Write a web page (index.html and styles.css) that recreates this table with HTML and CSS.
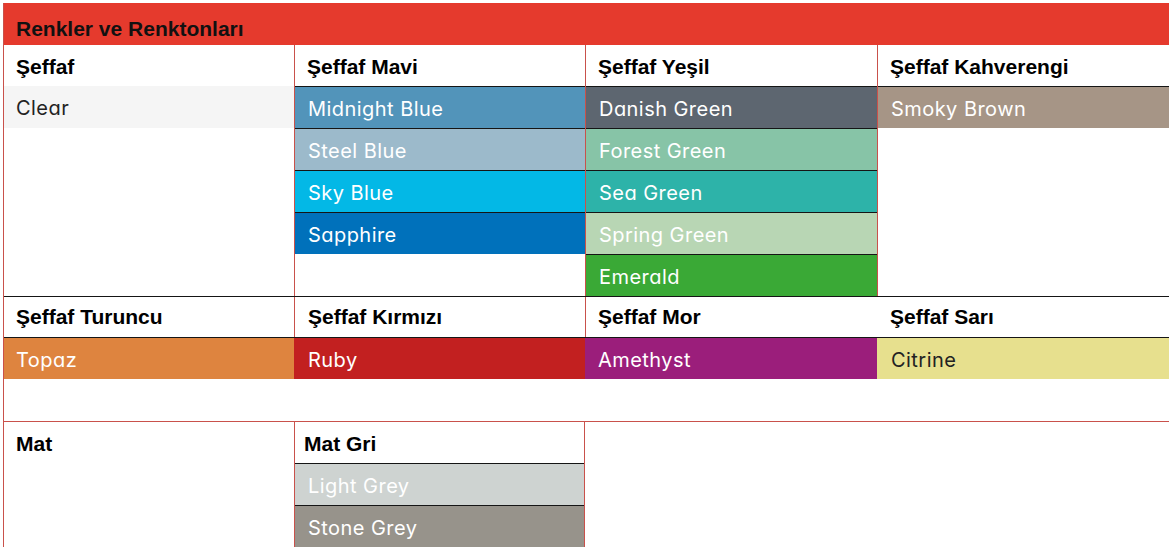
FILE: index.html
```html
<!DOCTYPE html>
<html lang="tr">
<head>
    <meta charset="UTF-8">
    <meta name="viewport" content="width=device-width, initial-scale=1.0">
    <title>Renkler ve Renktonları</title>
    <link rel="stylesheet" href="styles.css">
</head>
<body>
    <div class="chart">
        <div class="chart-title">Renkler ve Renktonları</div>

        <div class="group group-top">
            <div class="family">
                <div class="family-name">Şeffaf</div>
                <div class="swatch dark clear">Clear</div>
            </div>
            <div class="family">
                <div class="family-name">Şeffaf Mavi</div>
                <div class="swatch midnight-blue">Midnight Blue</div>
                <div class="swatch steel-blue">Steel Blue</div>
                <div class="swatch sky-blue">Sky Blue</div>
                <div class="swatch sapphire">Sapphire</div>
            </div>
            <div class="family">
                <div class="family-name">Şeffaf Yeşil</div>
                <div class="swatch danish-green">Danish Green</div>
                <div class="swatch forest-green">Forest Green</div>
                <div class="swatch sea-green">Sea Green</div>
                <div class="swatch spring-green">Spring Green</div>
                <div class="swatch emerald">Emerald</div>
            </div>
            <div class="family">
                <div class="family-name">Şeffaf Kahverengi</div>
                <div class="swatch smoky-brown">Smoky Brown</div>
            </div>
        </div>

        <div class="group group-mid">
            <div class="family">
                <div class="family-name">Şeffaf Turuncu</div>
                <div class="swatch topaz">Topaz</div>
            </div>
            <div class="family">
                <div class="family-name">Şeffaf Kırmızı</div>
                <div class="swatch ruby">Ruby</div>
            </div>
            <div class="family">
                <div class="family-name">Şeffaf Mor</div>
                <div class="swatch amethyst">Amethyst</div>
            </div>
            <div class="family">
                <div class="family-name">Şeffaf Sarı</div>
                <div class="swatch dark citrine">Citrine</div>
            </div>
        </div>

        <div class="group group-mat">
            <div class="family">
                <div class="family-name">Mat</div>
            </div>
            <div class="family">
                <div class="family-name">Mat Gri</div>
                <div class="swatch light-grey">Light Grey</div>
                <div class="swatch stone-grey">Stone Grey</div>
            </div>
            <div class="family"></div>
            <div class="family"></div>
        </div>
    </div>
</body>
</html>
```

FILE: styles.css
```css
body {
    margin: 0;
    padding: 0;
    background-color: #fff;
    font-family: "Liberation Sans", Arial, sans-serif;
}
.chart {
    width: 1166px;
    margin: 3px 0 0 3px;
    border-left: 1px solid #c9514b;
    box-sizing: border-box;
}
.chart-title {
    height: 42px;
    box-sizing: border-box;
    padding: 9px 0 0 12px;
    display: flex;
    align-items: center;
    background-color: #e53a2d;
    color: #111;
    font-size: 21px;
    font-weight: bold;
}
.group {
    display: grid;
    grid-template-columns: 290px 291px 292px 292px;
}
.family-name {
    height: 41px;
    box-sizing: border-box;
    padding: 2px 0 0 12px;
    display: flex;
    align-items: center;
    color: #000;
    font-size: 21px;
    font-weight: bold;
}
.swatch {
    height: 42px;
    box-sizing: border-box;
    padding: 2px 0 0 12px;
    display: flex;
    align-items: center;
    border-top: 1px solid #151515;
    color: #fff;
    font-family: Inter, "Noto Sans", sans-serif;
    font-size: 20px;
    letter-spacing: 0.45px;
    font-feature-settings: "cv11";
}
.family + .family .swatch {
    padding-left: 13px;
}
.swatch.dark {
    color: #222;
}

/* top block: four transparent families */
.group-top .family + .family {
    border-left: 1px solid #c9514b;
}

/* middle block */
.group-mid {
    border-top: 1px solid #151515;
    padding-bottom: 42px;
}
.group-mid .family-name {
    height: 40px;
    padding-top: 0;
}
.group-mid .family:nth-child(2) .family-name,
.group-mid .family:nth-child(3) .family-name {
    border-left: 1px solid #c9514b;
}
.group-mid .family:nth-child(2) .family-name,
.group-mid .family:nth-child(4) .family-name {
    padding-left: 13px;
}
.group-mid .family:nth-child(2) .swatch,
.group-mid .family:nth-child(4) .swatch {
    padding-left: 14px;
}

/* mat block */
.group-mat {
    border-top: 1px solid #c9514b;
}
.group-mat .family:nth-child(2) {
    border-left: 1px solid #c9514b;
    border-right: 1px solid #c9514b;
}
.group-mat .family:nth-child(2) .family-name {
    padding-left: 9px;
}

/* colours */
.clear { background-color: #f5f5f5; border-top: none; }
.midnight-blue { background-color: #5294ba; }
.steel-blue { background-color: #9cbacb; }
.sky-blue { background-color: #03b8e6; }
.sapphire { background-color: #0071bb; }
.danish-green { background-color: #5d6670; }
.forest-green { background-color: #87c4a7; }
.sea-green { background-color: #2db3a9; }
.spring-green { background-color: #b8d6b4; }
.emerald { background-color: #3aa936; }
.smoky-brown { background-color: #a69586; }
.topaz { background-color: #de843f; }
.ruby { background-color: #c22020; }
.amethyst { background-color: #9b1e7b; }
.citrine { background-color: #e7e08e; }
.light-grey { background-color: #ced3d1; }
.stone-grey { background-color: #97938b; }
```
